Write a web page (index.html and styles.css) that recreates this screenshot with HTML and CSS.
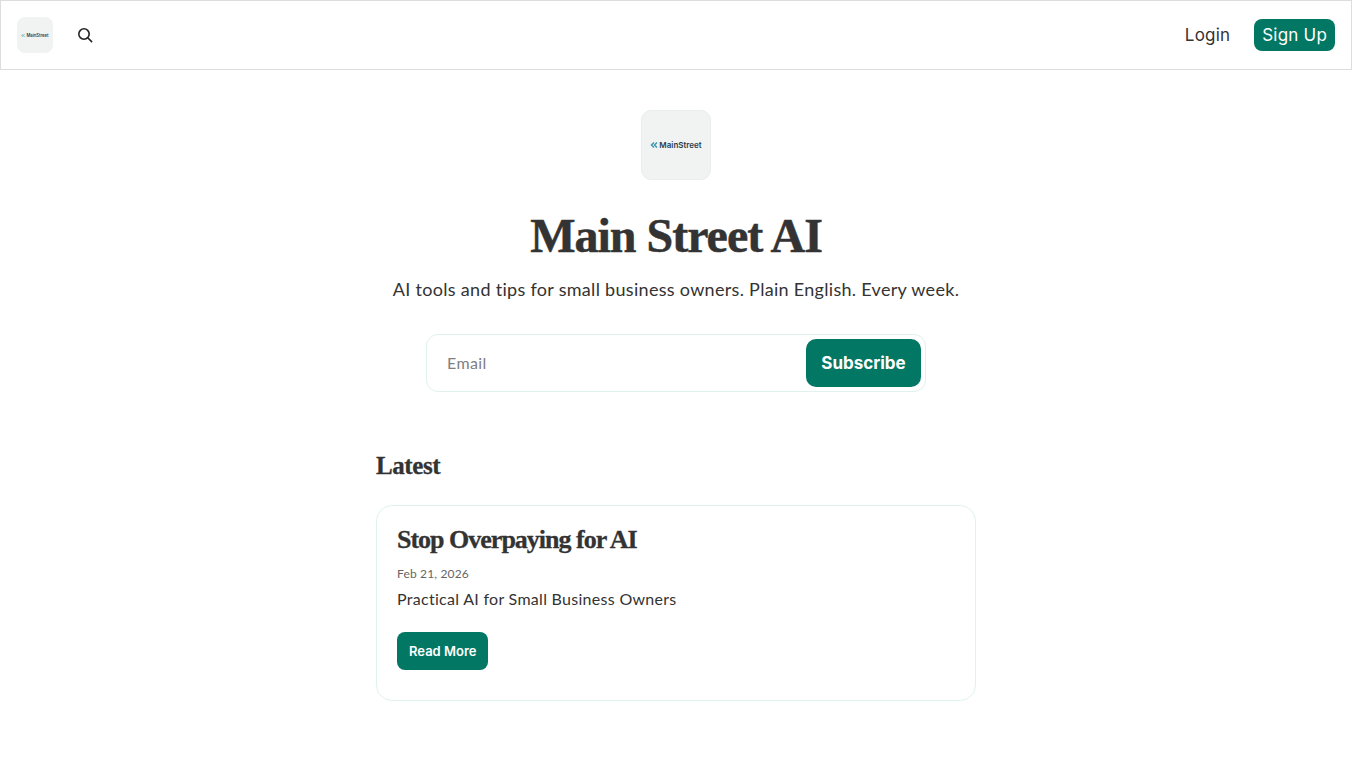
FILE: index.html
```html
<!DOCTYPE html>
<html lang="en">
<head>
    <meta charset="UTF-8">
    <meta name="viewport" content="width=device-width, initial-scale=1.0">
    <title>Main Street AI</title>
    <link rel="stylesheet" href="styles.css">
</head>
<body>

<header class="navbar">
    <div class="nav-left">
        <a class="logo logo-small" href="#">
            <svg class="logo-mark" viewBox="0 0 8 6" fill="none" stroke="#3d9cb0" stroke-width="1.5">
                <path d="M4 .5L1.5 3 4 5.5"/>
                <path d="M7 .5L4.5 3 7 5.5"/>
            </svg>
            <span class="logo-text">MainStreet</span>
        </a>
        <button class="search-btn" aria-label="Search">
            <svg width="16" height="16" viewBox="0 0 16 16" fill="none" stroke="#222" stroke-width="1.6" stroke-linecap="round">
                <circle cx="7" cy="7" r="5.2"/>
                <path d="M11 11l3.6 3.6"/>
            </svg>
        </button>
    </div>
    <nav class="nav-right">
        <a class="login" href="#">Login</a>
        <a class="signup" href="#">Sign Up</a>
    </nav>
</header>

<main class="content">
    <section class="hero">
        <div class="logo logo-large">
            <svg class="logo-mark" viewBox="0 0 8 6" fill="none" stroke="#3d9cb0" stroke-width="1.5">
                <path d="M4 .5L1.5 3 4 5.5"/>
                <path d="M7 .5L4.5 3 7 5.5"/>
            </svg>
            <span class="logo-text">MainStreet</span>
        </div>
        <h1>Main Street AI</h1>
        <p class="tagline">AI tools and tips for small business owners. Plain English. Every week.</p>
        <form class="subscribe">
            <input type="email" placeholder="Email">
            <button type="button">Subscribe</button>
        </form>
    </section>

    <section class="latest">
        <h2>Latest</h2>
        <article class="post">
            <h3>Stop Overpaying for AI</h3>
            <div class="date">Feb 21, 2026</div>
            <p>Practical AI for Small Business Owners</p>
            <a class="read-more" href="#">Read More</a>
        </article>
    </section>
</main>

</body>
</html>
```

FILE: styles.css
```css
:root {
    --primary-color: #017764;
    --text-color: #333333;
    --border-color: #dff2ee;
    --logo-bg: #f1f2f2;
}

* {
    box-sizing: border-box;
}

body {
    margin: 0;
    font-family: 'Lato', 'Open Sans', Arial, sans-serif;
    color: var(--text-color);
    background: #ffffff;
}

a {
    text-decoration: none;
}

.navbar {
    height: 70px;
    padding: 0 16px;
    display: flex;
    justify-content: space-between;
    align-items: center;
    border: 1px solid #dddddd;
}

.nav-left {
    display: flex;
    align-items: center;
    gap: 16px;
}

.logo {
    display: flex;
    align-items: center;
    justify-content: center;
    background: var(--logo-bg);
    font-family: 'Inter', Arial, sans-serif;
    font-weight: 600;
    color: #2a3d4d;
    white-space: nowrap;
}

.logo-small {
    width: 36px;
    height: 36px;
    border-radius: 8px;
    gap: 1px;
    font-size: 4.2px;
}

.logo-small .logo-mark {
    width: 4px;
    height: 3px;
}

.logo-large {
    width: 70px;
    height: 70px;
    border-radius: 10px;
    border: 1px solid #e8eeee;
    gap: 1px;
    font-size: 8px;
}

.logo-mark {
    width: 8px;
    height: 6px;
}

.search-btn {
    width: 32px;
    height: 32px;
    padding: 0;
    border: none;
    background: none;
    display: flex;
    align-items: center;
    justify-content: center;
}

.nav-right {
    display: flex;
    align-items: center;
    gap: 24px;
    font-family: 'Inter', Arial, sans-serif;
    font-size: 17px;
    letter-spacing: 0.2px;
}

.login {
    color: #333333;
}

.signup {
    height: 32px;
    line-height: 32px;
    padding: 0 8px;
    color: #ffffff;
    background: var(--primary-color);
    border-radius: 8px;
}

.content {
    width: 600px;
    margin: 0 auto;
    padding-top: 40px;
}

.hero {
    display: flex;
    flex-direction: column;
    align-items: center;
}

h1 {
    margin: 24px 0 0;
    font-family: 'Liberation Serif', serif;
    font-size: 48px;
    line-height: 64px;
    font-weight: 700;
    letter-spacing: -1px;
    -webkit-text-stroke: 0.5px #333333;
}

.tagline {
    margin: 7px 0 0;
    font-size: 18px;
    line-height: 28px;
    letter-spacing: 0.3px;
}

.subscribe {
    width: 500px;
    height: 58px;
    margin-top: 31px;
    padding: 4px;
    display: flex;
    align-items: stretch;
    border: 1px solid var(--border-color);
    border-radius: 12px;
}

.subscribe input {
    flex: 1;
    min-width: 0;
    padding: 0 16px 2px;
    border: none;
    outline: none;
    font-family: inherit;
    font-size: 16px;
    letter-spacing: 0.4px;
}

.subscribe input::placeholder {
    color: #808080;
}

.subscribe button {
    width: 115px;
    border: none;
    border-radius: 10px;
    background: var(--primary-color);
    color: #ffffff;
    font-family: 'Inter', Arial, sans-serif;
    font-size: 17px;
    font-weight: 700;
}

.latest {
    margin-top: 58px;
}

h2 {
    margin: 0 0 23px;
    font-family: 'Liberation Serif', serif;
    font-size: 25px;
    line-height: 32px;
    font-weight: 700;
    letter-spacing: -0.4px;
    -webkit-text-stroke: 0.3px #333333;
}

.post {
    height: 196px;
    padding: 20px;
    border: 1px solid var(--border-color);
    border-radius: 16px;
}

h3 {
    margin: 0;
    font-family: 'Liberation Serif', serif;
    font-size: 26px;
    line-height: 28px;
    font-weight: 700;
    letter-spacing: -1px;
    -webkit-text-stroke: 0.3px #333333;
}

.date {
    margin-top: 12px;
    font-size: 12px;
    line-height: 16px;
    letter-spacing: 0.16px;
    color: #666666;
}

.post p {
    margin: 5px 0 0;
    font-size: 16px;
    line-height: 24px;
    letter-spacing: 0.29px;
}

.read-more {
    display: inline-block;
    height: 38px;
    line-height: 38px;
    margin-top: 21px;
    padding: 0 12px;
    font-family: 'Inter', Arial, sans-serif;
    font-size: 13px;
    font-weight: 600;
    color: #ffffff;
    background: var(--primary-color);
    border-radius: 8px;
}
```
